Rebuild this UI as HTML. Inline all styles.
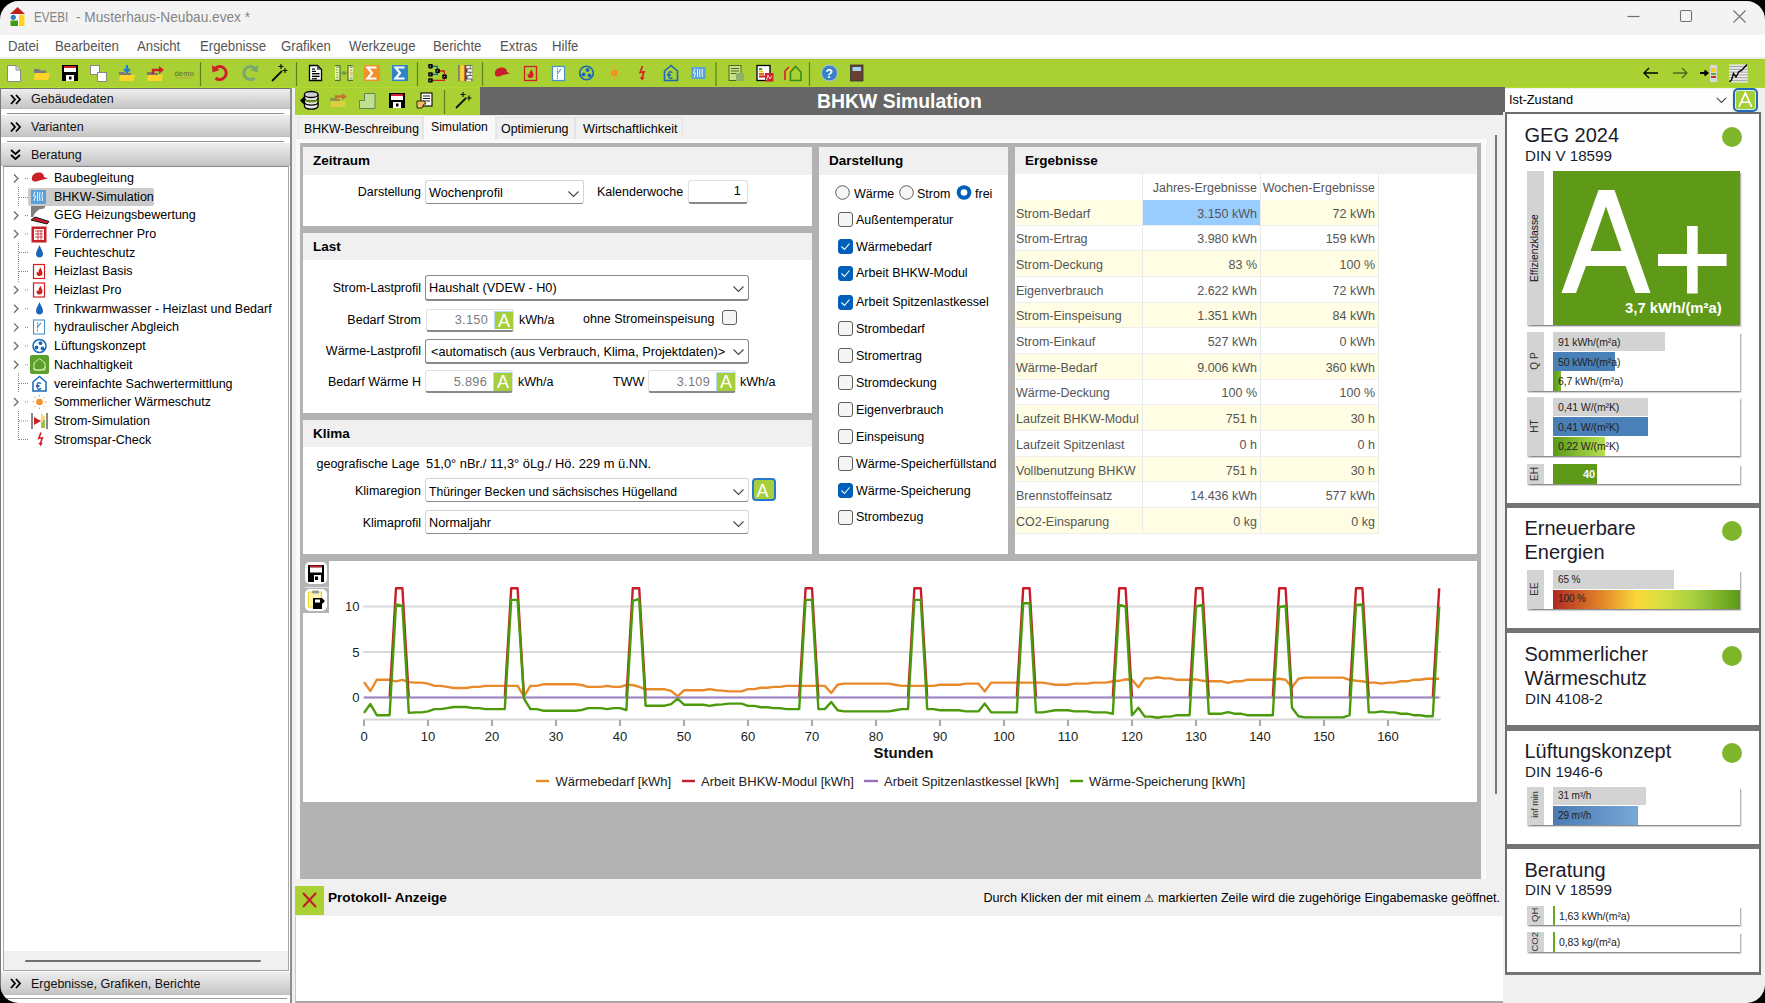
<!DOCTYPE html>
<html><head><meta charset="utf-8"><title>EVEBI</title>
<style>
*{box-sizing:border-box}
html,body{margin:0;padding:0}
body{width:1765px;height:1003px;overflow:hidden;background:#000;position:relative;font-family:"Liberation Sans",sans-serif;font-size:12.5px;color:#000}
.a{position:absolute}
.t{position:absolute;white-space:nowrap;line-height:1}
svg{position:absolute;overflow:visible}
#win{position:absolute;left:0;top:0;width:1765px;height:1003px;background:#f0f0f0;overflow:hidden}
#corner{position:absolute;left:0;top:1px;width:1765px;height:1002px;border-radius:18.5px;box-shadow:0 0 0 40px #000;z-index:99;pointer-events:none}
.hdr{position:absolute;left:4px;width:286px;height:22px;background:linear-gradient(#eeeeee,#dadada 50%,#c6c6c6);border-bottom:1px solid #bdbdbd}
.hdr .t{left:27px;top:5px;font-size:12.5px;color:#111}
.chev{position:absolute;left:10px;top:6px}
.tree .t{font-size:12.5px;color:#000}
.ph{position:absolute;background:#f0f0f0;height:27px}
.ph .t{left:10px;top:7px;font-weight:bold;font-size:13.5px}
.lbl{font-size:12.5px;color:#000}
.inp{position:absolute;background:#fff;border:1px solid #d6d6d6;border-bottom-color:#9a9a9a;border-radius:3px}
.cb{position:absolute;width:15px;height:15px;border:1px solid #5e5e5e;border-radius:3px;background:#f5f5f5}
.cb.on{background:#005fb8;border-color:#005fb8}
.row .t{font-size:12.5px;color:#555}
</style></head><body>
<div id="win">
<style>
.combo{position:absolute;background:#fff;border:1px solid #d4d4d4;border-bottom:1px solid #8a8a8a;border-radius:3px}
.combo.dk{border:1px solid #8a8a8a;border-bottom-width:2px}
.combo .t{left:3px;top:6px;font-size:12.7px}
.combo svg{right:4px;top:9.5px}
.edit{position:absolute;background:#fff;border:1px solid #e0e0e0;border-bottom:2px solid #8a8a8a;border-radius:3px}
.edit .t{right:25px;top:4.3px;font-size:12.7px;color:#7a7a7a;letter-spacing:0.3px}
.abox{position:absolute;width:19px;height:18.5px;background:#a5cf3c;color:#fff;font-size:18px;line-height:19px;text-align:center;border-top:1px solid #b8dcf8;border-left:1px solid #b8dcf8}
.lb{position:absolute;white-space:nowrap;line-height:1;font-size:12.5px}
.lbr{position:absolute;white-space:nowrap;line-height:1;font-size:12.5px;text-align:right}
</style>
<!-- title bar -->
<div class="a" style="left:0;top:0;width:1765px;height:35px;background:#f3f3f3"></div>
<svg style="left:0;top:0" width="40" height="35">
 <path d="M10 14 L17.5 7 L25 14 Z" fill="#c0201f"/>
 <rect x="10.5" y="14.5" width="14" height="12" fill="#fff"/>
 <circle cx="13.3" cy="17.3" r="2.6" fill="#2f7fc0"/>
 <rect x="10.5" y="20.5" width="7.5" height="5.5" fill="#3f9a10"/>
 <rect x="19" y="14.8" width="5.5" height="11.2" fill="#ffd21f"/>
</svg>
<div class="t" style="left:33.5px;top:9.7px;font-size:14.5px;color:#858585;transform:scaleX(0.8);transform-origin:0 0">EVEBI</div>
<div class="t" style="left:76px;top:9.7px;font-size:14.5px;color:#858585;transform:scaleX(0.943);transform-origin:0 0">- Musterhaus-Neubau.evex *</div>
<svg style="left:1620px;top:0" width="145" height="35">
 <path d="M7.5 16.5 H19.5" stroke="#707070" stroke-width="1.2"/>
 <rect x="60.5" y="10.5" width="11" height="11" rx="1.5" fill="none" stroke="#707070" stroke-width="1.1"/>
 <path d="M113.5 10.5 L125.5 22.5 M125.5 10.5 L113.5 22.5" stroke="#707070" stroke-width="1.1"/>
</svg>
<!-- menu -->
<div class="a" style="left:0;top:35px;width:1765px;height:22px;background:#fff"></div>
<div class="a" style="left:0;top:57px;width:1765px;height:2px;background:#ececec"></div>
<div class="t" style="top:38.7px;font-size:14.5px;color:#555;transform:scaleX(0.91);transform-origin:0 0;left:7.5px">Datei</div>
<div class="t" style="top:38.7px;font-size:14.5px;color:#555;transform:scaleX(0.91);transform-origin:0 0;left:55.4px">Bearbeiten</div>
<div class="t" style="top:38.7px;font-size:14.5px;color:#555;transform:scaleX(0.91);transform-origin:0 0;left:136.7px">Ansicht</div>
<div class="t" style="top:38.7px;font-size:14.5px;color:#555;transform:scaleX(0.91);transform-origin:0 0;left:199.5px">Ergebnisse</div>
<div class="t" style="top:38.7px;font-size:14.5px;color:#555;transform:scaleX(0.91);transform-origin:0 0;left:281.3px">Grafiken</div>
<div class="t" style="top:38.7px;font-size:14.5px;color:#555;transform:scaleX(0.91);transform-origin:0 0;left:349px">Werkzeuge</div>
<div class="t" style="top:38.7px;font-size:14.5px;color:#555;transform:scaleX(0.91);transform-origin:0 0;left:433px">Berichte</div>
<div class="t" style="top:38.7px;font-size:14.5px;color:#555;transform:scaleX(0.91);transform-origin:0 0;left:499.5px">Extras</div>
<div class="t" style="top:38.7px;font-size:14.5px;color:#555;transform:scaleX(0.91);transform-origin:0 0;left:552px">Hilfe</div>
<!-- toolbar -->
<div class="a" style="left:0;top:59px;width:1765px;height:29px;background:#a9d133;border-top:1px solid #a2cc22;border-bottom:1px solid #b0da2c"></div>
<svg style="left:0;top:0;z-index:2" width="1765" height="120">
 <!-- new doc -->
 <path d="M7.5 65.5 H16 L20.5 70 V81.5 H7.5 Z" fill="#fff" stroke="#888" stroke-width="1"/>
 <path d="M16 65.5 V70 H20.5" fill="#ddd" stroke="#888" stroke-width="1"/>
 <!-- open folder -->
 <path d="M34 69 H39 L40.5 70.5 H46 V73 H34 Z" fill="#7a7a7a"/>
 <path d="M35 73 H50 L48 80 H34 Z" fill="#ffd42a"/>
 <!-- save -->
 <rect x="62" y="65" width="16" height="16" fill="#000"/>
 <rect x="64" y="66" width="12" height="2" fill="#d0202a"/>
 <rect x="64" y="68" width="12" height="4" fill="#fff"/>
 <rect x="66" y="75" width="8" height="6" fill="#fff"/>
 <rect x="69" y="76.5" width="2.5" height="3" fill="#000"/>
 <!-- copy -->
 <rect x="90.5" y="65.5" width="9" height="9" fill="#fff" stroke="#888"/>
 <rect x="97.5" y="72.5" width="9" height="9" fill="#fff" stroke="#888"/>
 <!-- import -->
 <path d="M119 72 H124 L125 73 H131 V75 H119 Z" fill="#7a7a7a"/>
 <path d="M120 75 H135 L133.5 81 H119 Z" fill="#ffd42a"/>
 <path d="M127 65 V71 M124 69 L127 72 L130 69" stroke="#1f7fd0" stroke-width="2.2" fill="none"/>
 <!-- export -->
 <path d="M147 72 H152 L153 73 H158 V75 H147 Z" fill="#7a7a7a"/>
 <path d="M148 75 H163 L161.5 81 H147 Z" fill="#ffd42a"/>
 <path d="M153 74 V70 H160" stroke="#d0202a" stroke-width="2.5" fill="none"/><path d="M159 66 L164 70 L159 74 Z" fill="#d0202a"/>
 <!-- demo -->
 <text x="174.5" y="75.5" font-family="Liberation Sans" font-size="7.5" fill="#5d6640" letter-spacing="0.2">demo</text>
 <path d="M175 77.8 H192" stroke="#d08050" stroke-width="0.5"/>
 <!-- sep -->
 <path d="M200.5 62 V86" stroke="#5f7f1a" stroke-width="1.2"/>
 <!-- undo -->
 <path d="M215 68.5 A6.5 6.5 0 1 1 215.5 78" stroke="#d0202a" stroke-width="3" fill="none"/>
 <path d="M212 65 L212.5 72.5 L219.5 70 Z" fill="#d0202a"/>
 <!-- redo -->
 <path d="M255 68.5 A6.5 6.5 0 1 0 254.5 78" stroke="#7aa776" stroke-width="3" fill="none"/>
 <path d="M258 65 L257.5 72.5 L250.5 70 Z" fill="#7aa776"/>
 <!-- wand -->
 <path d="M272 81 L282 71" stroke="#111" stroke-width="1.8"/>
 <path d="M281 64 V69 M278.5 66.5 H283.5 M285 68 V73 M282.5 70.5 H287.5" stroke="#111" stroke-width="1.2"/>
 <path d="M296.5 62 V86" stroke="#5f7f1a" stroke-width="1.2"/>
 <!-- doc -->
 <path d="M309.5 65.5 H317.5 L321.5 69.5 V80.5 H309.5 Z" fill="#fff" stroke="#000" stroke-width="1.3"/>
 <path d="M317 65.8 V69.8 H321.2 Z" fill="#555"/>
 <rect x="312" y="68.5" width="3" height="1.2" fill="#000"/>
 <rect x="312" y="70.8" width="4" height="1.2" fill="#000"/>
 <rect x="312" y="73" width="7.5" height="4" fill="#aaa"/>
 <rect x="312" y="73" width="7.5" height="1.1" fill="#000"/>
 <rect x="312" y="76" width="7.5" height="1.1" fill="#000"/>
 <rect x="312" y="78.2" width="5" height="1.2" fill="#000"/>
 <!-- compare -->
 <rect x="335" y="65.5" width="5" height="15" fill="#e6f6b0"/>
 <path d="M335 65.7 H340 V80.3 H335" stroke="#56702a" stroke-width="1.2" fill="none"/>
 <path d="M336 67.5 H338.5 M336 70 H338 M336 72.5 H338.5 M336 75 H338 M336 77.5 H338.5" stroke="#7a9a4a" stroke-width="0.8"/>
 <path d="M340 73 H348" stroke="#6a8a3a" stroke-width="1"/>
 <circle cx="344" cy="73" r="1.9" fill="#7a9a3a"/>
 <rect x="348" y="65.5" width="5" height="15" fill="#e6f6b0"/>
 <path d="M353 65.7 H348 V80.3 H353" stroke="#56702a" stroke-width="1.2" fill="none"/>
 <path d="M350 67.5 H352.5 M350 78 H352.5" stroke="#7a9a4a" stroke-width="1"/>
 <path d="M350 70.3 H352 M350 72.8 H350.8 M351.3 72.8 H352.5 M350.5 75 H352.5" stroke="#d86a20" stroke-width="0.9"/>
 <!-- sigma orange -->
 <rect x="364" y="65" width="16" height="16" fill="#f0902a"/>
 <path d="M376.5 67.5 H367.5 L372 73 L367.5 78.5 H376.5" stroke="#fff" stroke-width="2.2" fill="none"/>
 <!-- sigma blue -->
 <rect x="392" y="65" width="16" height="16" fill="#2f83c8"/>
 <path d="M404.5 67.5 H395.5 L400 73 L395.5 78.5 H404.5" stroke="#fff" stroke-width="2.2" fill="none"/>
 <path d="M417.5 62 V86" stroke="#5f7f1a" stroke-width="1.2"/>
 <!-- tree diagram -->
 <path d="M432.5 66.3 H437.3 V69.5 M432.5 74.4 H437.3 V72.5" stroke="#1060c0" stroke-width="1.3" fill="none"/>
 <path d="M439.5 71 H444.3 V75 M432.5 80.4 H444.3 V78.5" stroke="#d02020" stroke-width="1.3" fill="none"/>
 <g fill="#000"><rect x="428.2" y="64.1" width="4.6" height="4.3" rx="0.8"/><rect x="435.3" y="68.8" width="4.6" height="4.3" rx="0.8"/><rect x="428.2" y="72.2" width="4.6" height="4.3" rx="0.8"/><rect x="428.2" y="78.2" width="4.6" height="4.3" rx="0.8"/><rect x="442.2" y="74.5" width="4.6" height="4.3" rx="0.8"/></g>
 <g stroke="#ddd" stroke-width="0.9"><path d="M429.5 66.8 L431 65.6"/><path d="M436.6 71.5 L438.1 70.3"/><path d="M429.5 74.9 L431 73.7"/><path d="M429.5 80.9 L431 79.7"/><path d="M443.5 77.2 L445 76"/></g>
 <!-- wall -->
 <rect x="458.4" y="65.1" width="14" height="16" fill="#4a4a4a"/>
 <rect x="458.4" y="65.1" width="1.4" height="16" fill="#8a8a9a"/>
 <rect x="459.8" y="65.1" width="4.8" height="16" fill="#f8d84a"/>
 <path d="M460.6 65.1 V81.1 M463.8 65.1 V81.1" stroke="#f5c000" stroke-width="1" stroke-dasharray="2 1"/>
 <rect x="464.6" y="65.1" width="1.2" height="16" fill="#d02020"/>
 <g fill="#eee"><rect x="466.3" y="65.8" width="3.5" height="2.6"/><rect x="470.5" y="65.8" width="1.9" height="2.6"/><rect x="467.5" y="69.2" width="4.9" height="2.6"/><rect x="466.3" y="72.6" width="3.5" height="2.6"/><rect x="470.5" y="72.6" width="1.9" height="2.6"/><rect x="467.5" y="76" width="4.9" height="2.6"/><rect x="466.3" y="79.4" width="5" height="1.7"/></g>
 <path d="M482.5 62 V86" stroke="#5f7f1a" stroke-width="1.2"/>
 <!-- cap -->
 <path d="M495 75 C494 69 499 67 503 67.5 C506 68 507 70 507 72 L510 73.5 L503 75 C500 76 497 78 495 75 Z" fill="#c8202a"/>
 <!-- heat box -->
 <rect x="524.5" y="66.5" width="12" height="14" fill="none" stroke="#d0202a" stroke-width="1.3"/>
 <path d="M530.5 78 C528 78 527 76 528 73.5 C528.5 74.8 529.3 75 529.5 74 C529.5 72 530.5 70.5 532 69.5 C531.6 71.5 533.5 72.5 533.5 75 C533.5 77 532.2 78 530.5 78 Z" fill="#d0202a"/>
 <!-- hydraulic -->
 <rect x="552.5" y="66.5" width="12" height="14" fill="#fff" stroke="#4a90d0" stroke-width="1.2"/>
 <path d="M557.5 68.5 V79" stroke="#4a90d0" stroke-width="1.1" stroke-dasharray="1.5 0.8" fill="none"/><path d="M557.5 73.5 L561 69" stroke="#4a90d0" stroke-width="1.2" fill="none"/>
 <!-- vent -->
 <circle cx="586.5" cy="73" r="6.8" fill="none" stroke="#1a66b8" stroke-width="1.6"/>
 <circle cx="587.5" cy="70" r="2" fill="#1a66b8"/><circle cx="583.5" cy="74.5" r="2" fill="#1a66b8"/><circle cx="589.5" cy="75.5" r="2" fill="#1a66b8"/>
 
 <!-- sun -->
 <circle cx="614.5" cy="73" r="3.6" fill="#f4922a"/>
 <path d="M614.5 66 V67.5 M614.5 78.5 V80 M607.5 73 H609 M620 73 H621.5 M609.5 68 L610.5 69 M618.5 77 L619.5 78 M619.5 68 L618.5 69 M610.5 77 L609.5 78" stroke="#f4922a" stroke-width="1"/>
 <!-- lightning -->
 <path d="M642.5 66 L640.2 72.5 L644 71.8 L642 78" stroke="#d8202a" stroke-width="1.7" fill="none"/><path d="M639.8 77.2 H644.6 L642.2 80.6 Z" fill="#d8202a"/>
 <!-- house euro -->
 <path d="M664.5 80.5 V71 L671 65.5 L677.5 71 V80.5 Z" fill="none" stroke="#1a6ab8" stroke-width="1.6"/>
 <text x="667" y="79" font-family="Liberation Sans" font-size="10" fill="#1a6ab8" font-weight="bold">€</text>
 <!-- bhkw -->
 <rect x="691.5" y="67" width="14" height="12" fill="#5ba0d8"/>
 <path d="M695 68.5 L693.5 73 H695.5 L694 77.5 M697.5 69 V77 M700 69 Q699 73 700 77 M702.5 69 Q701.5 73 702.5 77" stroke="#fff" stroke-width="0.9" fill="none"/>
 <path d="M716 62 V86" stroke="#5f7f1a" stroke-width="1.2"/>
 <!-- report -->
 <rect x="729" y="65.5" width="12" height="15" fill="#c9e08a" stroke="#4a6a1a" stroke-width="1"/>
 <path d="M731 68.5 H739 M731 71 H739 M731 73.5 H737" stroke="#4a6a1a" stroke-width="1"/>
 <rect x="736" y="73" width="8" height="8" fill="#8fb06a"/>
 <!-- energy pdf -->
 <rect x="757" y="65.5" width="13" height="15" fill="#fff" stroke="#000" stroke-width="1.3"/>
 <rect x="759" y="68" width="3" height="2" fill="#3a9a2a"/><rect x="759" y="70.5" width="4" height="2" fill="#f0c020"/><rect x="759" y="73" width="5" height="2" fill="#e07020"/><rect x="759" y="75.5" width="6" height="2" fill="#d02020"/>
 <rect x="765" y="73" width="8.5" height="8.5" fill="#d02030"/>
 <path d="M766.5 80 L768 75 L770 79 L772 76" stroke="#fff" stroke-width="0.8" fill="none"/>
 <!-- arcs house -->
 <path d="M785 80 V71 L789 67" stroke="#d0202a" stroke-width="1.6" fill="none"/>
 <path d="M787.5 80 V71.5 L791.5 68" stroke="#f0c020" stroke-width="1.6" fill="none"/>
 <path d="M790.5 80.5 V72 L795.5 66.5 L801 72 V80.5 Z" stroke="#3a8a1a" stroke-width="1.6" fill="none"/>
 <path d="M809.5 62 V86" stroke="#5f7f1a" stroke-width="1.2"/>
 <!-- help -->
 <circle cx="829.5" cy="73" r="8" fill="#3a82c8" stroke="#aac8e8" stroke-width="1"/>
 <text x="825.5" y="78" font-family="Liberation Sans" font-size="12" font-weight="bold" fill="#fff">?</text>
 <!-- door -->
 <rect x="850.5" y="65" width="12.5" height="16" fill="#6a4030" stroke="#333" stroke-width="0.8"/>
 <rect x="852.5" y="67" width="8.5" height="4" fill="#a8d0f0"/>
 <!-- right icons -->
 <path d="M1644 73 H1658 M1649 68 L1644 73 L1649 78" stroke="#000" stroke-width="1.3" fill="none"/>
 <path d="M1673 73 H1687 M1682 68 L1687 73 L1682 78" stroke="#506a20" stroke-width="1.3" fill="none"/>
 <path d="M1700 73 H1707 M1704.5 70.5 L1707.5 73 L1704.5 75.5" stroke="#000" stroke-width="2" fill="none"/>
 <rect x="1710" y="65" width="7" height="17" fill="#d8d8d8"/><rect x="1711" y="68" width="5" height="4" fill="#f5d020"/><rect x="1711" y="73" width="5" height="2" fill="#60b030"/><rect x="1711" y="76" width="5" height="2" fill="#d03030"/>
 <rect x="1729" y="64.5" width="18.5" height="18" fill="#f4f4f4"/>
 <path d="M1729 66.5 H1747.5 M1729 69.3 H1747.5 M1729 72.1 H1747.5 M1729 74.9 H1747.5 M1729 77.7 H1747.5 M1729 80.5 H1747.5" stroke="#a8a8a8" stroke-width="1.3"/>
 <path d="M1729.5 82 L1731.5 80 L1733.5 73.5 L1736 77 L1739 71.5 L1741.5 70.5 L1747 64.5" stroke="#000" stroke-width="1.4" fill="none"/>
</svg>
<!-- left panel -->
<div class="a" style="left:0;top:88px;width:292px;height:915px;background:#f0f0f0"></div>
<div class="a" style="left:0;top:88px;width:292px;height:915px;background:#fff;border-left:1px solid #7a7a7a;border-right:2px solid #8e8e8e"></div>
<div class="a" style="left:7px;top:113px;width:277px;height:1px;background:#8f8f8f"></div>
<div class="a" style="left:7px;top:141px;width:277px;height:1px;background:#8f8f8f"></div>
<div class="hdr" style="left:1px;top:88px;width:289px;height:21px;border-top:1px solid #707070"><div class="t" style="left:30px;top:4.2px">Gebäudedaten</div></div>
<div class="hdr" style="left:1px;top:115px;width:289px;height:22px"><div class="t" style="left:30px;top:6px">Varianten</div></div>
<div class="hdr" style="left:1px;top:143px;width:289px;height:23px"><div class="t" style="left:30px;top:6px">Beratung</div></div>
<svg style="left:0;top:0" width="30" height="170">
 <path d="M11 95 L15 99.5 L11 104 M16 95 L20 99.5 L16 104" stroke="#000" stroke-width="1.8" fill="none"/>
 <path d="M11 122.5 L15 127 L11 131.5 M16 122.5 L20 127 L16 131.5" stroke="#000" stroke-width="1.8" fill="none"/>
 <path d="M11 150 L15.5 154 L20 150 M11 155 L15.5 159 L20 155" stroke="#000" stroke-width="1.8" fill="none"/>
</svg>
<!-- tree box -->
<div class="a" style="left:3px;top:166px;width:286px;height:805px;background:#fff;border:1px solid #a8a8a8;border-top:1.5px solid #888c92"></div>
<div class="a" style="left:4px;top:951px;width:284px;height:19px;background:#f0f0f0"></div>
<div class="a" style="left:25px;top:959.5px;width:236px;height:2px;background:#707070;border-radius:1px"></div>
<div class="a" style="left:28px;top:188px;width:126px;height:18px;background:#cbcbcb;border-radius:2px"></div>
<div class="tree">
 <div class="t" style="left:54px;top:171.8px">Baubegleitung</div>
 <div class="t" style="left:54px;top:190.5px">BHKW-Simulation</div>
 <div class="t" style="left:54px;top:209.2px">GEG Heizungsbewertung</div>
 <div class="t" style="left:54px;top:227.9px">Förderrechner Pro</div>
 <div class="t" style="left:54px;top:246.6px">Feuchteschutz</div>
 <div class="t" style="left:54px;top:265.3px">Heizlast Basis</div>
 <div class="t" style="left:54px;top:284px">Heizlast Pro</div>
 <div class="t" style="left:54px;top:302.7px">Trinkwarmwasser - Heizlast und Bedarf</div>
 <div class="t" style="left:54px;top:321.4px">hydraulischer Abgleich</div>
 <div class="t" style="left:54px;top:340.1px">Lüftungskonzept</div>
 <div class="t" style="left:54px;top:358.8px">Nachhaltigkeit</div>
 <div class="t" style="left:54px;top:377.5px">vereinfachte Sachwertermittlung</div>
 <div class="t" style="left:54px;top:396.2px">Sommerlicher Wärmeschutz</div>
 <div class="t" style="left:54px;top:414.9px">Strom-Simulation</div>
 <div class="t" style="left:54px;top:433.6px">Stromspar-Check</div>
</div>
<svg style="left:0;top:0" width="60" height="450">
 <g stroke="#6a6a6a" stroke-width="1.3" fill="none">
  <path d="M14 174.5 L18 178.5 L14 182.5"/>
  <path d="M14 211.5 L18 215.5 L14 219.5"/>
  <path d="M14 230 L18 234 L14 238"/>
  <path d="M14 286 L18 290 L14 294"/>
  <path d="M14 304.7 L18 308.7 L14 312.7"/>
  <path d="M14 323.4 L18 327.4 L14 331.4"/>
  <path d="M14 342 L18 346 L14 350"/>
  <path d="M14 360.8 L18 364.8 L14 368.8"/>
  <path d="M14 398 L18 402 L14 406"/>
 </g>
 <g stroke="#888" stroke-width="1" stroke-dasharray="1 1" fill="none">
  <path d="M18.5 187 V206 M19 197.5 H29"/>
  <path d="M18.5 243 V282 M19 252.5 H29 M19 271.5 H29"/>
  <path d="M18.5 373 V393 M19 383.5 H29"/>
  <path d="M18.5 411 V440 M19 421 H29 M19 439.5 H29"/>
  <path d="M25 178.5 H29 M25 215.5 H29 M25 234 H29 M25 290 H29 M25 308.7 H29 M25 327.4 H29 M25 346 H29 M25 364.8 H29 M25 402 H29"/>
 </g>
 <!-- icons -->
 <path d="M32 180 C31 175 35 172.5 39 172.5 C42 172.5 44 174.5 44 177 L48 178.5 L41 180 C38 181 34 183 32 180 Z" fill="#c8202a"/>
 <rect x="31" y="190" width="15" height="14" fill="#5ba0d8"/>
 <path d="M35 191.5 L33.5 196 H35.5 L34 201 M37.5 192 V201 M40 192 Q39 196.5 40 201 M42.5 192 Q41.5 196.5 42.5 201" stroke="#fff" stroke-width="0.9" fill="none"/>
 <path d="M31 206 H45.5 L44 208.5 L39 209.5 L35 213 L33 217 L31 217 Z" fill="#808080"/>
 <path d="M31 220 L35 217 L49 221.5 L47 224 Z" fill="#c8202a" stroke="#111" stroke-width="1"/>
 <rect x="31.5" y="226.5" width="15" height="16" fill="#c8202a"/>
 <rect x="34" y="229" width="10" height="11" fill="#fff"/>
 <path d="M35 231 H43 M35 234 H43 M35 237 H43 M38 230 V240 M41 230 V240" stroke="#c8202a" stroke-width="0.8"/>
 <path d="M39.5 245 C38 249 36 251 36 254 C36 256 37.5 257.5 39.5 257.5 C41.5 257.5 43 256 43 254 C43 251 41 249 39.5 245 Z" fill="#1a66b8"/>
 <rect x="33.5" y="264.5" width="11" height="14" fill="#fff" stroke="#d02020" stroke-width="1.2"/>
 <path d="M39.5 276 C37 276 36 274 37 271.5 C37.5 272.8 38.3 273 38.5 272 C38.5 270 39.5 268.5 41 267.5 C40.6 269.5 42.5 270.5 42.5 273 C42.5 275 41.2 276 39.5 276 Z" fill="#d02020"/>
 <rect x="33.5" y="283" width="11" height="14" fill="#fff" stroke="#d02020" stroke-width="1.2"/>
 <path d="M39.5 294.5 C37 294.5 36 292.5 37 290 C37.5 291.3 38.3 291.5 38.5 290.5 C38.5 288.5 39.5 287 41 286 C40.6 288 42.5 289 42.5 291.5 C42.5 293.5 41.2 294.5 39.5 294.5 Z" fill="#d02020"/>
 <path d="M39.5 302 C38 306 36 308 36 311 C36 313 37.5 314.5 39.5 314.5 C41.5 314.5 43 313 43 311 C43 308 41 306 39.5 302 Z" fill="#1a66b8"/>
 <rect x="33.5" y="320" width="11" height="14" fill="#fff" stroke="#4a90d0" stroke-width="1.1"/>
 <path d="M37.5 322.5 V332" stroke="#4a90d0" stroke-width="1.1" stroke-dasharray="1.5 0.8" fill="none"/><path d="M37.5 327 L41 322.8" stroke="#4a90d0" stroke-width="1.2" fill="none"/>
 <circle cx="39.5" cy="346" r="6.5" fill="none" stroke="#1a66b8" stroke-width="1.5"/>
 <circle cx="40.5" cy="343.2" r="1.9" fill="#1a66b8"/><circle cx="36.5" cy="347.5" r="1.9" fill="#1a66b8"/><circle cx="42.5" cy="348.5" r="1.9" fill="#1a66b8"/>
 <rect x="30" y="355" width="19" height="19" rx="2" fill="#5aa02a"/>
 <path d="M34 370 V363 L39.5 358.5 L45 363 V370 Z" fill="none" stroke="#d8f0c0" stroke-width="1"/>
 <path d="M33 368 Q39 373 46 367" stroke="#d8f0c0" stroke-width="1" fill="none"/>
 <path d="M33 391 V382 L39.5 376.5 L46 382 V391 Z" fill="none" stroke="#1a66b8" stroke-width="1.5"/>
 <text x="35.8" y="389.5" font-family="Liberation Sans" font-size="10" font-weight="bold" fill="#1a66b8">€</text>
 <circle cx="39.5" cy="402" r="3.3" fill="#f4922a"/>
 <path d="M39.5 395 V396.5 M39.5 407.5 V409 M32.5 402 H34 M45 402 H46.5 M34.5 397 L35.5 398 M43.5 406 L44.5 407 M44.5 397 L43.5 398 M35.5 406 L34.5 407" stroke="#f4922a" stroke-width="1"/>
 <rect x="31" y="413" width="2" height="16" fill="#888"/>
 <rect x="46" y="413" width="2" height="16" fill="#888"/>
 <path d="M34 417 L41 421 L34 425 Z" fill="#d02020"/>
 <path d="M42 414 V428 M44 416 V428" stroke="#f0c020" stroke-width="1.2"/>
 <path d="M42 422 V428 M44 420 V428" stroke="#60b030" stroke-width="1.2"/>
 <path d="M41 432.5 L38.7 438.5 L42.3 437.8 L40.5 443.5" stroke="#d8202a" stroke-width="1.6" fill="none"/><path d="M38.3 442.8 H42.9 L40.6 446.2 Z" fill="#d8202a"/>
</svg>
<div class="hdr" style="left:1px;top:972px;width:289px;height:23px"><div class="t" style="left:30px;top:6px">Ergebnisse, Grafiken, Berichte</div></div>
<svg style="left:0;top:960px" width="30" height="40">
 <path d="M11 19 L15 23.5 L11 28 M16 19 L20 23.5 L16 28" stroke="#000" stroke-width="1.8" fill="none"/>
</svg>
<div class="a" style="left:7px;top:998px;width:280px;height:1px;background:#999"></div>
<!-- main area -->
<div class="a" style="left:295px;top:88px;width:185px;height:27px;background:#a9d133"></div>
<div class="a" style="left:480px;top:87px;width:1025px;height:28px;background:#666"></div>
<div class="t" style="left:817px;top:92px;font-size:19.4px;font-weight:bold;color:#fff">BHKW Simulation</div>
<svg style="left:0;top:0;z-index:2" width="480" height="120">
 <!-- database -->
 <path d="M300 100.5 L304 96.5 V104.5 Z" fill="#000"/>
 <path d="M304.5 94.5 V106.5 A6.8 3 0 0 0 318 106.5 V94.5" fill="#e8e8e8" stroke="#000" stroke-width="1.3"/>
 <ellipse cx="311.2" cy="94.5" rx="6.8" ry="3" fill="#d0d0d0" stroke="#000" stroke-width="1.3"/>
 <path d="M304.5 98.5 A6.8 3 0 0 0 318 98.5 M304.5 102.5 A6.8 3 0 0 0 318 102.5" stroke="#000" stroke-width="1.1" fill="none"/>
 <path d="M305.5 100 A6 2.4 0 0 0 317 100" stroke="#6a9a10" stroke-width="1.8" fill="none"/>
 <!-- folder arrow (disabled) -->
 <path d="M330 98 H334 L335 99 H340 V101 H330 Z" fill="#8a9a50"/>
 <path d="M331 101 H346 L344.5 107 H330 Z" fill="#d8d040"/>
 <path d="M336 100 V96.5 H343" stroke="#c07830" stroke-width="2.4" fill="none"/><path d="M342 93 L347 96.5 L342 100 Z" fill="#c07830"/>
 <!-- green step -->
 <path d="M359.5 108.5 V100.5 H364.5 V93.5 H375 V108.5 Z" fill="#c0e090" stroke="#5a8a5a" stroke-width="1"/>
 <!-- save -->
 <rect x="389" y="93" width="16" height="15" fill="#000"/>
 <rect x="391" y="94" width="12" height="2" fill="#d0202a"/>
 <rect x="391" y="96" width="12" height="4" fill="#fff"/>
 <rect x="393" y="102" width="8" height="6" fill="#fff"/>
 <rect x="396" y="103.5" width="2.5" height="3" fill="#000"/>
 <!-- print hand -->
 <rect x="421" y="93" width="11" height="13" fill="#fff" stroke="#000" stroke-width="1.1"/>
 <path d="M423 96 H430 M423 98.5 H430 M423 101 H430" stroke="#000" stroke-width="0.9"/>
 <path d="M417 101 H424 L426 104 H424 L422 108 H417 Z" fill="#f0c060" stroke="#000" stroke-width="0.8"/>
 <path d="M444.5 90 V114" stroke="#5f7f1a" stroke-width="1.2"/>
 <!-- wand -->
 <path d="M456 108 L466 98" stroke="#111" stroke-width="1.8"/>
 <path d="M463 92 V97 M460.5 94.5 H465.5 M469 95.5 V100.5 M466.5 98 H471.5" stroke="#111" stroke-width="1.2"/>
</svg>
<!-- tabs -->
<div class="a" style="left:296px;top:115px;width:1205px;height:885px;background:#f0f0f0"></div>
<div class="a" style="left:296px;top:139px;width:1189px;height:740px;background:#f9f9f9"></div>
<div class="a" style="left:298px;top:117px;width:125px;height:22px;background:#f0f0f0;border:1px solid #e3e3e3;border-bottom:none"></div>
<div class="a" style="left:423px;top:115px;width:73px;height:25px;background:#f9f9f9;border:1px solid #e8e8e8;border-bottom:none"></div>
<div class="a" style="left:496px;top:117px;width:79px;height:22px;background:#f0f0f0;border:1px solid #e3e3e3;border-bottom:none"></div>
<div class="a" style="left:575px;top:117px;width:108px;height:22px;background:#f0f0f0;border:1px solid #e3e3e3;border-bottom:none"></div>
<div class="t" style="left:304px;top:122.8px;font-size:12.2px">BHKW-Beschreibung</div>
<div class="t" style="left:431px;top:120.8px;font-size:12.2px">Simulation</div>
<div class="t" style="left:501px;top:122.8px;font-size:12.4px">Optimierung</div>
<div class="t" style="left:583px;top:122.8px;font-size:12.6px">Wirtschaftlichkeit</div>
<div class="a" style="left:1485px;top:139px;width:1px;height:740px;background:#fff"></div>
<div class="a" style="left:1495px;top:135px;width:1.6px;height:659px;background:#777"></div>
<!-- content frame -->
<div class="a" style="left:300px;top:143px;width:1181px;height:661px;background:#b2b2b2"></div>
<!-- Zeitraum -->
<div class="a" style="left:303px;top:147px;width:509px;height:79px;background:#fff"></div>
<div class="ph" style="left:303px;top:147px;width:509px;height:28px"><div class="t" style="left:10px;top:6.5px">Zeitraum</div></div>
<div class="lbr" style="right:1344px;top:185.5px">Darstellung</div>
<div class="combo" style="left:425px;top:180px;width:159px;height:24px"><div class="t">Wochenprofil</div><svg width="11" height="6"><path d="M0.5 0.5 L5.5 5.5 L10.5 0.5" stroke="#444" stroke-width="1.1" fill="none"/></svg></div>
<div class="lb" style="left:597px;top:185.5px">Kalenderwoche</div>
<div class="edit" style="left:688px;top:180px;width:60px;height:24px"><div class="t" style="right:6px;color:#000">1</div></div>
<!-- Last -->
<div class="a" style="left:303px;top:233px;width:509px;height:180px;background:#fff"></div>
<div class="ph" style="left:303px;top:233px;width:509px;height:27px"><div class="t" style="left:10px;top:6.5px">Last</div></div>
<div class="lbr" style="right:1344px;top:282px">Strom-Lastprofil</div>
<div class="combo dk" style="left:425px;top:275px;width:324px;height:25.5px"><div class="t">Haushalt (VDEW - H0)</div><svg width="11" height="6"><path d="M0.5 0.5 L5.5 5.5 L10.5 0.5" stroke="#444" stroke-width="1.1" fill="none"/></svg></div>
<div class="lbr" style="right:1344px;top:313.5px">Bedarf Strom</div>
<div class="edit" style="left:426px;top:308.5px;width:88px;height:23.2px"><div class="t">3.150</div><div class="abox" style="left:67px;top:1px">A</div></div>
<div class="lb" style="left:519px;top:313.5px">kWh/a</div>
<div class="lb" style="left:583px;top:312.5px">ohne Stromeinspeisung</div>
<div class="cb" style="left:722px;top:310px"></div>
<div class="lbr" style="right:1344px;top:345px">Wärme-Lastprofil</div>
<div class="combo dk" style="left:425px;top:338.5px;width:324px;height:25px"><div class="t" style="left:5px">&lt;automatisch (aus Verbrauch, Klima, Projektdaten)&gt;</div><svg width="11" height="6"><path d="M0.5 0.5 L5.5 5.5 L10.5 0.5" stroke="#444" stroke-width="1.1" fill="none"/></svg></div>
<div class="lbr" style="right:1344px;top:375.5px">Bedarf Wärme H</div>
<div class="edit" style="left:425px;top:370.3px;width:88px;height:23.2px"><div class="t">5.896</div><div class="abox" style="left:67px;top:1px">A</div></div>
<div class="lb" style="left:518px;top:375.5px">kWh/a</div>
<div class="lb" style="left:613px;top:375.5px">TWW</div>
<div class="edit" style="left:648px;top:370.3px;width:88px;height:23.2px"><div class="t">3.109</div><div class="abox" style="left:67px;top:1px">A</div></div>
<div class="lb" style="left:740px;top:375.5px">kWh/a</div>
<!-- Klima -->
<div class="a" style="left:303px;top:420px;width:509px;height:134px;background:#fff"></div>
<div class="ph" style="left:303px;top:420px;width:509px;height:27px"><div class="t" style="left:10px;top:6.5px">Klima</div></div>
<div class="lb" style="left:316.5px;top:458px">geografische Lage</div>
<div class="lb" style="left:426px;top:457.8px;font-size:12.9px">51,0° nBr./ 11,3° öLg./ Hö. 229 m ü.NN.</div>
<div class="lbr" style="right:1344px;top:485px">Klimaregion</div>
<div class="combo" style="left:425px;top:478.3px;width:324px;height:23.7px"><div class="t" style="font-size:12.2px;top:6.3px">Thüringer Becken und sächsisches Hügelland</div><svg width="11" height="6"><path d="M0.5 0.5 L5.5 5.5 L10.5 0.5" stroke="#444" stroke-width="1.1" fill="none"/></svg></div>
<div class="a" style="left:751.5px;top:478px;width:24px;height:22.5px;border:2px solid #2a78c8;border-radius:4px;background:#a5cf3c"><div class="t" style="left:3px;top:1.5px;font-size:18px;color:#fff">A</div></div>
<div class="lbr" style="right:1344px;top:516.5px">Klimaprofil</div>
<div class="combo" style="left:425px;top:510px;width:324px;height:23.5px"><div class="t">Normaljahr</div><svg width="11" height="6"><path d="M0.5 0.5 L5.5 5.5 L10.5 0.5" stroke="#444" stroke-width="1.1" fill="none"/></svg></div>
<!-- Darstellung -->
<div class="a" style="left:819px;top:147px;width:189px;height:407px;background:#fff"></div>
<div class="ph" style="left:819px;top:147px;width:189px;height:28px"><div class="t" style="left:10px;top:6.5px">Darstellung</div></div>
<svg style="left:0;top:0" width="1010" height="560">
 <circle cx="842.5" cy="192.5" r="6.8" fill="#f7f7f7" stroke="#5e5e5e" stroke-width="1"/>
 <circle cx="906.5" cy="192.5" r="6.8" fill="#f7f7f7" stroke="#5e5e5e" stroke-width="1"/>
 <circle cx="964" cy="192.5" r="7.3" fill="#005fb8"/>
 <circle cx="964" cy="192.5" r="3.3" fill="#fff"/>
</svg>
<div class="lb" style="left:854px;top:187.5px">Wärme</div>
<div class="lb" style="left:917px;top:187.5px">Strom</div>
<div class="lb" style="left:975px;top:187.5px">frei</div>
<div class="cb" style="left:838px;top:212px"></div><div class="lb" style="left:856px;top:213.5px">Außentemperatur</div>
<div class="cb on" style="left:838px;top:239px"></div><div class="lb" style="left:856px;top:240.5px">Wärmebedarf</div>
<div class="cb on" style="left:838px;top:266px"></div><div class="lb" style="left:856px;top:267px">Arbeit BHKW-Modul</div>
<div class="cb on" style="left:838px;top:295px"></div><div class="lb" style="left:856px;top:295.5px">Arbeit Spitzenlastkessel</div>
<div class="cb" style="left:838px;top:321px"></div><div class="lb" style="left:856px;top:322.5px">Strombedarf</div>
<div class="cb" style="left:838px;top:348px"></div><div class="lb" style="left:856px;top:349.5px">Stromertrag</div>
<div class="cb" style="left:838px;top:375px"></div><div class="lb" style="left:856px;top:376.5px">Stromdeckung</div>
<div class="cb" style="left:838px;top:402px"></div><div class="lb" style="left:856px;top:403.5px">Eigenverbrauch</div>
<div class="cb" style="left:838px;top:429px"></div><div class="lb" style="left:856px;top:430.5px">Einspeisung</div>
<div class="cb" style="left:838px;top:456px"></div><div class="lb" style="left:856px;top:457.5px">Wärme-Speicherfüllstand</div>
<div class="cb on" style="left:838px;top:483px"></div><div class="lb" style="left:856px;top:484.5px">Wärme-Speicherung</div>
<div class="cb" style="left:838px;top:510px"></div><div class="lb" style="left:856px;top:511px">Strombezug</div>
<svg style="left:0;top:0" width="860" height="520">
 <g stroke="#fff" stroke-width="1.1" fill="none">
  <path d="M841.5 246.5 L844.5 249.5 L849.5 243.5"/>
  <path d="M841.5 273.5 L844.5 276.5 L849.5 270.5"/>
  <path d="M841.5 302.5 L844.5 305.5 L849.5 299.5"/>
  <path d="M841.5 490.5 L844.5 493.5 L849.5 487.5"/>
 </g>
</svg>
<!-- Ergebnisse -->
<div class="a" style="left:1015px;top:147px;width:462px;height:407px;background:#fff"></div>
<div class="ph" style="left:1015px;top:147px;width:462px;height:27px"><div class="t" style="left:10px;top:6.5px">Ergebnisse</div></div>
<div class="a" style="left:1015px;top:174px;width:363px;height:26px;background:#fff"></div>
<div class="lbr" style="right:508px;top:181.5px;color:#555">Jahres-Ergebnisse</div>
<div class="lbr" style="right:390px;top:181.5px;color:#555">Wochen-Ergebnisse</div>
<div class="a" style="left:1015px;top:200.00px;width:363px;height:25.67px;background:#fffde3"></div>
<div class="a" style="left:1143px;top:200.00px;width:117px;height:24.67px;background:#99ccff"></div>
<div class="lb" style="left:1016px;top:207.80px;color:#555">Strom-Bedarf</div>
<div class="lbr" style="right:508px;top:207.80px;color:#555">3.150 kWh</div>
<div class="lbr" style="right:390px;top:207.80px;color:#555">72 kWh</div>
<div class="a" style="left:1015px;top:224.67px;width:363px;height:1px;background:#eeeeee"></div>
<div class="a" style="left:1015px;top:225.67px;width:363px;height:25.67px;background:#fff"></div>
<div class="lb" style="left:1016px;top:233.47px;color:#555">Strom-Ertrag</div>
<div class="lbr" style="right:508px;top:233.47px;color:#555">3.980 kWh</div>
<div class="lbr" style="right:390px;top:233.47px;color:#555">159 kWh</div>
<div class="a" style="left:1015px;top:250.34px;width:363px;height:1px;background:#eeeeee"></div>
<div class="a" style="left:1015px;top:251.34px;width:363px;height:25.67px;background:#fffde3"></div>
<div class="lb" style="left:1016px;top:259.14px;color:#555">Strom-Deckung</div>
<div class="lbr" style="right:508px;top:259.14px;color:#555">83 %</div>
<div class="lbr" style="right:390px;top:259.14px;color:#555">100 %</div>
<div class="a" style="left:1015px;top:276.01px;width:363px;height:1px;background:#eeeeee"></div>
<div class="a" style="left:1015px;top:277.01px;width:363px;height:25.67px;background:#fff"></div>
<div class="lb" style="left:1016px;top:284.81px;color:#555">Eigenverbrauch</div>
<div class="lbr" style="right:508px;top:284.81px;color:#555">2.622 kWh</div>
<div class="lbr" style="right:390px;top:284.81px;color:#555">72 kWh</div>
<div class="a" style="left:1015px;top:301.68px;width:363px;height:1px;background:#eeeeee"></div>
<div class="a" style="left:1015px;top:302.68px;width:363px;height:25.67px;background:#fffde3"></div>
<div class="lb" style="left:1016px;top:310.48px;color:#555">Strom-Einspeisung</div>
<div class="lbr" style="right:508px;top:310.48px;color:#555">1.351 kWh</div>
<div class="lbr" style="right:390px;top:310.48px;color:#555">84 kWh</div>
<div class="a" style="left:1015px;top:327.35px;width:363px;height:1px;background:#eeeeee"></div>
<div class="a" style="left:1015px;top:328.35px;width:363px;height:25.67px;background:#fff"></div>
<div class="lb" style="left:1016px;top:336.15px;color:#555">Strom-Einkauf</div>
<div class="lbr" style="right:508px;top:336.15px;color:#555">527 kWh</div>
<div class="lbr" style="right:390px;top:336.15px;color:#555">0 kWh</div>
<div class="a" style="left:1015px;top:353.02px;width:363px;height:1px;background:#eeeeee"></div>
<div class="a" style="left:1015px;top:354.02px;width:363px;height:25.67px;background:#fffde3"></div>
<div class="lb" style="left:1016px;top:361.82px;color:#555">Wärme-Bedarf</div>
<div class="lbr" style="right:508px;top:361.82px;color:#555">9.006 kWh</div>
<div class="lbr" style="right:390px;top:361.82px;color:#555">360 kWh</div>
<div class="a" style="left:1015px;top:378.69px;width:363px;height:1px;background:#eeeeee"></div>
<div class="a" style="left:1015px;top:379.69px;width:363px;height:25.67px;background:#fff"></div>
<div class="lb" style="left:1016px;top:387.49px;color:#555">Wärme-Deckung</div>
<div class="lbr" style="right:508px;top:387.49px;color:#555">100 %</div>
<div class="lbr" style="right:390px;top:387.49px;color:#555">100 %</div>
<div class="a" style="left:1015px;top:404.36px;width:363px;height:1px;background:#eeeeee"></div>
<div class="a" style="left:1015px;top:405.36px;width:363px;height:25.67px;background:#fffde3"></div>
<div class="lb" style="left:1016px;top:413.16px;color:#555">Laufzeit BHKW-Modul</div>
<div class="lbr" style="right:508px;top:413.16px;color:#555">751 h</div>
<div class="lbr" style="right:390px;top:413.16px;color:#555">30 h</div>
<div class="a" style="left:1015px;top:430.03px;width:363px;height:1px;background:#eeeeee"></div>
<div class="a" style="left:1015px;top:431.03px;width:363px;height:25.67px;background:#fff"></div>
<div class="lb" style="left:1016px;top:438.83px;color:#555">Laufzeit Spitzenlast</div>
<div class="lbr" style="right:508px;top:438.83px;color:#555">0 h</div>
<div class="lbr" style="right:390px;top:438.83px;color:#555">0 h</div>
<div class="a" style="left:1015px;top:455.70px;width:363px;height:1px;background:#eeeeee"></div>
<div class="a" style="left:1015px;top:456.70px;width:363px;height:25.67px;background:#fffde3"></div>
<div class="lb" style="left:1016px;top:464.50px;color:#555">Vollbenutzung BHKW</div>
<div class="lbr" style="right:508px;top:464.50px;color:#555">751 h</div>
<div class="lbr" style="right:390px;top:464.50px;color:#555">30 h</div>
<div class="a" style="left:1015px;top:481.37px;width:363px;height:1px;background:#eeeeee"></div>
<div class="a" style="left:1015px;top:482.37px;width:363px;height:25.67px;background:#fff"></div>
<div class="lb" style="left:1016px;top:490.17px;color:#555">Brennstoffeinsatz</div>
<div class="lbr" style="right:508px;top:490.17px;color:#555">14.436 kWh</div>
<div class="lbr" style="right:390px;top:490.17px;color:#555">577 kWh</div>
<div class="a" style="left:1015px;top:507.04px;width:363px;height:1px;background:#eeeeee"></div>
<div class="a" style="left:1015px;top:508.04px;width:363px;height:25.67px;background:#fffde3"></div>
<div class="lb" style="left:1016px;top:515.84px;color:#555">CO2-Einsparung</div>
<div class="lbr" style="right:508px;top:515.84px;color:#555">0 kg</div>
<div class="lbr" style="right:390px;top:515.84px;color:#555">0 kg</div>
<div class="a" style="left:1015px;top:532.71px;width:363px;height:1px;background:#eeeeee"></div>
<div class="a" style="left:1142px;top:174px;width:1px;height:359.7px;background:#eaeaea"></div>
<div class="a" style="left:1260px;top:174px;width:1px;height:359.7px;background:#eaeaea"></div>
<div class="a" style="left:1378px;top:174px;width:1px;height:359.7px;background:#eaeaea"></div>
<!-- chart -->
<div class="a" style="left:303px;top:561px;width:1174px;height:241px;background:#fff"></div>
<div class="a" style="left:303px;top:561px;width:26px;height:52px;background:#b4b4b4"></div>
<div class="a" style="left:305px;top:562px;width:22px;height:22px;background:#fff;border-radius:5px"></div>
<div class="a" style="left:305px;top:586.5px;width:24px;height:1.5px;background:#e6e6e6"></div>
<div class="a" style="left:305px;top:589px;width:22px;height:22px;background:#fff;border-radius:5px"></div>
<svg style="left:0;top:0" width="1480" height="800">
<rect x="308" y="565" width="16" height="17" fill="#000"/><rect x="310" y="565.5" width="12" height="2" fill="#d0202a"/><rect x="310" y="567.5" width="12" height="5" fill="#fff"/><rect x="314" y="575" width="7" height="7" fill="#fff"/><rect x="315" y="576.5" width="3" height="3.5" fill="#000"/>
<rect x="308.5" y="592" width="13" height="15" fill="#fff4b0" stroke="#f0d020" stroke-width="1"/><rect x="312" y="590.5" width="7" height="3" rx="1" fill="#999"/><path d="M313 598 H322 L325 601 L322 604 V609 H313 Z" fill="#000"/><rect x="315" y="599.5" width="5" height="3" fill="#fff"/>
<path d="M363 606.5 H1441" stroke="#d9d9d9" stroke-width="2"/>
<path d="M363 652.0 H1441" stroke="#d9d9d9" stroke-width="2"/>
<path d="M363 697.5 H1441" stroke="#d9d9d9" stroke-width="2"/>
<path d="M363 719.5 H1441" stroke="#d6d6d6" stroke-width="2"/>
<path d="M364.0 720 V726" stroke="#a8a8a8" stroke-width="2"/>
<text x="364.0" y="740.5" text-anchor="middle" font-family="Liberation Sans" font-size="13" fill="#222">0</text>
<path d="M428.0 720 V726" stroke="#a8a8a8" stroke-width="2"/>
<text x="428.0" y="740.5" text-anchor="middle" font-family="Liberation Sans" font-size="13" fill="#222">10</text>
<path d="M492.0 720 V726" stroke="#a8a8a8" stroke-width="2"/>
<text x="492.0" y="740.5" text-anchor="middle" font-family="Liberation Sans" font-size="13" fill="#222">20</text>
<path d="M556.0 720 V726" stroke="#a8a8a8" stroke-width="2"/>
<text x="556.0" y="740.5" text-anchor="middle" font-family="Liberation Sans" font-size="13" fill="#222">30</text>
<path d="M620.0 720 V726" stroke="#a8a8a8" stroke-width="2"/>
<text x="620.0" y="740.5" text-anchor="middle" font-family="Liberation Sans" font-size="13" fill="#222">40</text>
<path d="M684.0 720 V726" stroke="#a8a8a8" stroke-width="2"/>
<text x="684.0" y="740.5" text-anchor="middle" font-family="Liberation Sans" font-size="13" fill="#222">50</text>
<path d="M748.0 720 V726" stroke="#a8a8a8" stroke-width="2"/>
<text x="748.0" y="740.5" text-anchor="middle" font-family="Liberation Sans" font-size="13" fill="#222">60</text>
<path d="M812.0 720 V726" stroke="#a8a8a8" stroke-width="2"/>
<text x="812.0" y="740.5" text-anchor="middle" font-family="Liberation Sans" font-size="13" fill="#222">70</text>
<path d="M876.0 720 V726" stroke="#a8a8a8" stroke-width="2"/>
<text x="876.0" y="740.5" text-anchor="middle" font-family="Liberation Sans" font-size="13" fill="#222">80</text>
<path d="M940.0 720 V726" stroke="#a8a8a8" stroke-width="2"/>
<text x="940.0" y="740.5" text-anchor="middle" font-family="Liberation Sans" font-size="13" fill="#222">90</text>
<path d="M1004.0 720 V726" stroke="#a8a8a8" stroke-width="2"/>
<text x="1004.0" y="740.5" text-anchor="middle" font-family="Liberation Sans" font-size="13" fill="#222">100</text>
<path d="M1068.0 720 V726" stroke="#a8a8a8" stroke-width="2"/>
<text x="1068.0" y="740.5" text-anchor="middle" font-family="Liberation Sans" font-size="13" fill="#222">110</text>
<path d="M1132.0 720 V726" stroke="#a8a8a8" stroke-width="2"/>
<text x="1132.0" y="740.5" text-anchor="middle" font-family="Liberation Sans" font-size="13" fill="#222">120</text>
<path d="M1196.0 720 V726" stroke="#a8a8a8" stroke-width="2"/>
<text x="1196.0" y="740.5" text-anchor="middle" font-family="Liberation Sans" font-size="13" fill="#222">130</text>
<path d="M1260.0 720 V726" stroke="#a8a8a8" stroke-width="2"/>
<text x="1260.0" y="740.5" text-anchor="middle" font-family="Liberation Sans" font-size="13" fill="#222">140</text>
<path d="M1324.0 720 V726" stroke="#a8a8a8" stroke-width="2"/>
<text x="1324.0" y="740.5" text-anchor="middle" font-family="Liberation Sans" font-size="13" fill="#222">150</text>
<path d="M1388.0 720 V726" stroke="#a8a8a8" stroke-width="2"/>
<text x="1388.0" y="740.5" text-anchor="middle" font-family="Liberation Sans" font-size="13" fill="#222">160</text>
<text x="359.5" y="611.1" text-anchor="end" font-family="Liberation Sans" font-size="13" fill="#222">10</text>
<text x="359.5" y="656.6" text-anchor="end" font-family="Liberation Sans" font-size="13" fill="#222">5</text>
<text x="359.5" y="702.1" text-anchor="end" font-family="Liberation Sans" font-size="13" fill="#222">0</text>
<text x="903.5" y="757.5" text-anchor="middle" font-family="Liberation Sans" font-size="15" font-weight="bold" fill="#111">Stunden</text>
<polyline points="364.0,682.1 370.4,691.0 376.8,679.8 383.2,679.8 389.6,679.8 396.0,681.3 402.4,679.8 408.8,682.1 415.2,682.6 421.6,682.6 428.0,683.6 434.4,685.9 440.8,685.9 447.2,686.9 453.6,688.0 460.0,688.0 466.4,688.0 472.8,686.9 479.2,686.9 485.6,685.9 492.0,685.9 498.4,685.9 504.8,685.9 511.2,685.9 517.6,685.9 524.0,696.3 530.4,685.9 536.8,685.9 543.2,684.3 549.6,684.3 556.0,684.3 562.4,684.3 568.8,684.3 575.2,684.3 581.6,685.0 588.0,686.9 594.4,686.9 600.8,686.9 607.2,685.9 613.6,686.9 620.0,686.9 626.4,685.0 632.8,685.0 639.2,686.8 645.6,689.3 652.0,689.3 658.4,689.3 664.8,689.3 671.2,690.8 677.6,696.3 684.0,690.3 690.4,690.3 696.8,690.3 703.2,690.3 709.6,689.1 716.0,690.3 722.4,690.6 728.8,691.4 735.2,691.4 741.6,691.4 748.0,689.1 754.4,689.1 760.8,687.8 767.2,687.8 773.6,686.9 780.0,686.9 786.4,685.9 792.8,685.9 799.2,685.9 805.6,685.9 812.0,685.9 818.4,685.9 824.8,685.9 831.2,692.9 837.6,684.7 844.0,683.6 850.4,683.6 856.8,683.6 863.2,683.6 869.6,683.6 876.0,683.6 882.4,683.6 888.8,683.6 895.2,684.7 901.6,685.9 908.0,685.9 914.4,685.9 920.8,685.9 927.2,685.9 933.6,685.9 940.0,684.7 946.4,684.7 952.8,684.7 959.2,684.7 965.6,683.6 972.0,683.6 978.4,683.6 984.8,691.4 991.2,682.6 997.6,682.6 1004.0,682.6 1010.4,682.6 1016.8,682.6 1023.2,682.6 1029.6,682.6 1036.0,682.6 1042.4,682.6 1048.8,683.6 1055.2,684.7 1061.6,684.7 1068.0,684.7 1074.4,683.6 1080.8,683.6 1087.2,683.6 1093.6,682.6 1100.0,682.6 1106.4,682.6 1112.8,681.3 1119.2,680.8 1125.6,679.3 1132.0,679.8 1138.4,687.3 1144.8,678.4 1151.2,678.4 1157.6,677.3 1164.0,678.4 1170.4,678.4 1176.8,679.8 1183.2,679.8 1189.6,679.8 1196.0,679.3 1202.4,680.8 1208.8,681.3 1215.2,681.3 1221.6,681.3 1228.0,682.8 1234.4,681.3 1240.8,681.3 1247.2,679.8 1253.6,679.8 1260.0,679.8 1266.4,679.8 1272.8,679.8 1279.2,678.8 1285.6,679.8 1292.0,687.3 1298.4,678.8 1304.8,677.6 1311.2,677.6 1317.6,677.6 1324.0,677.6 1330.4,677.6 1336.8,677.6 1343.2,677.6 1349.6,679.8 1356.0,680.8 1362.4,681.3 1368.8,682.6 1375.2,682.6 1381.6,683.6 1388.0,682.6 1394.4,682.6 1400.8,681.3 1407.2,681.3 1413.6,679.8 1420.0,679.8 1426.4,678.8 1432.8,678.8 1439.2,678.8" fill="none" stroke="#e8892a" stroke-width="2.4" stroke-linejoin="round"/>
<polyline points="389.6,697.5 396.0,588.3 402.4,588.3 408.8,697.5" fill="none" stroke="#c41f2b" stroke-width="2.4" stroke-linejoin="round"/>
<polyline points="504.8,697.5 511.2,588.3 517.6,588.3 524.0,697.5" fill="none" stroke="#c41f2b" stroke-width="2.4" stroke-linejoin="round"/>
<polyline points="626.4,697.5 632.8,588.3 639.2,588.3 645.6,697.5" fill="none" stroke="#c41f2b" stroke-width="2.4" stroke-linejoin="round"/>
<polyline points="799.2,697.5 805.6,588.3 812.0,588.3 818.4,697.5" fill="none" stroke="#c41f2b" stroke-width="2.4" stroke-linejoin="round"/>
<polyline points="908.0,697.5 914.4,588.3 920.8,588.3 927.2,697.5" fill="none" stroke="#c41f2b" stroke-width="2.4" stroke-linejoin="round"/>
<polyline points="1016.8,697.5 1023.2,588.3 1029.6,588.3 1036.0,697.5" fill="none" stroke="#c41f2b" stroke-width="2.4" stroke-linejoin="round"/>
<polyline points="1112.8,697.5 1119.2,588.3 1125.6,588.3 1132.0,697.5" fill="none" stroke="#c41f2b" stroke-width="2.4" stroke-linejoin="round"/>
<polyline points="1189.6,697.5 1196.0,588.3 1202.4,588.3 1208.8,697.5" fill="none" stroke="#c41f2b" stroke-width="2.4" stroke-linejoin="round"/>
<polyline points="1272.8,697.5 1279.2,588.3 1285.6,588.3 1292.0,697.5" fill="none" stroke="#c41f2b" stroke-width="2.4" stroke-linejoin="round"/>
<polyline points="1349.6,697.5 1356.0,588.3 1362.4,588.3 1368.8,697.5" fill="none" stroke="#c41f2b" stroke-width="2.4" stroke-linejoin="round"/>
<polyline points="1432.8,697.5 1439.2,588.3" fill="none" stroke="#c41f2b" stroke-width="2.4" stroke-linejoin="round"/>
<path d="M364.0 697.5 H1439.2" stroke="#a083c6" stroke-width="2.2"/>
<polyline points="364.0,712.9 370.4,704.0 376.8,715.2 383.2,715.2 389.6,715.2 396.0,604.5 402.4,606.0 408.8,712.9 415.2,712.4 421.6,712.4 428.0,711.4 434.4,709.1 440.8,709.1 447.2,708.1 453.6,707.0 460.0,707.0 466.4,707.0 472.8,708.1 479.2,708.1 485.6,709.1 492.0,709.1 498.4,709.1 504.8,709.1 511.2,599.9 517.6,599.9 524.0,698.7 530.4,709.1 536.8,709.1 543.2,710.7 549.6,710.7 556.0,710.7 562.4,710.7 568.8,710.7 575.2,710.7 581.6,710.0 588.0,708.1 594.4,708.1 600.8,708.1 607.2,709.1 613.6,708.1 620.0,708.1 626.4,710.0 632.8,600.8 639.2,599.0 645.6,705.7 652.0,705.7 658.4,705.7 664.8,705.7 671.2,704.2 677.6,698.7 684.0,704.7 690.4,704.7 696.8,704.7 703.2,704.7 709.6,705.9 716.0,704.7 722.4,704.4 728.8,703.6 735.2,703.6 741.6,703.6 748.0,705.9 754.4,705.9 760.8,707.2 767.2,707.2 773.6,708.1 780.0,708.1 786.4,709.1 792.8,709.1 799.2,709.1 805.6,599.9 812.0,599.9 818.4,709.1 824.8,709.1 831.2,702.1 837.6,710.3 844.0,711.4 850.4,711.4 856.8,711.4 863.2,711.4 869.6,711.4 876.0,711.4 882.4,711.4 888.8,711.4 895.2,710.3 901.6,709.1 908.0,709.1 914.4,599.9 920.8,599.9 927.2,709.1 933.6,709.1 940.0,710.3 946.4,710.3 952.8,710.3 959.2,710.3 965.6,711.4 972.0,711.4 978.4,711.4 984.8,703.6 991.2,712.4 997.6,712.4 1004.0,712.4 1010.4,712.4 1016.8,712.4 1023.2,603.2 1029.6,603.2 1036.0,712.4 1042.4,712.4 1048.8,711.4 1055.2,710.3 1061.6,710.3 1068.0,710.3 1074.4,711.4 1080.8,711.4 1087.2,711.4 1093.6,712.4 1100.0,712.4 1106.4,712.4 1112.8,713.7 1119.2,605.0 1125.6,606.5 1132.0,715.2 1138.4,707.7 1144.8,716.6 1151.2,716.6 1157.6,717.7 1164.0,716.6 1170.4,716.6 1176.8,715.2 1183.2,715.2 1189.6,715.2 1196.0,606.5 1202.4,605.0 1208.8,713.7 1215.2,713.7 1221.6,713.7 1228.0,712.2 1234.4,713.7 1240.8,713.7 1247.2,715.2 1253.6,715.2 1260.0,715.2 1266.4,715.2 1272.8,715.2 1279.2,607.0 1285.6,606.0 1292.0,707.7 1298.4,716.2 1304.8,717.4 1311.2,717.4 1317.6,717.4 1324.0,717.4 1330.4,717.4 1336.8,717.4 1343.2,717.4 1349.6,715.2 1356.0,605.0 1362.4,604.5 1368.8,712.4 1375.2,712.4 1381.6,711.4 1388.0,712.4 1394.4,712.4 1400.8,713.7 1407.2,713.7 1413.6,715.2 1420.0,715.2 1426.4,716.2 1432.8,716.2 1439.2,607.0" fill="none" stroke="#4b9a0c" stroke-width="2.4" stroke-linejoin="round"/>
<path d="M536 781 H549" stroke="#e8892a" stroke-width="2.4"/>
<text x="555.5" y="785.5" font-family="Liberation Sans" font-size="13" fill="#222">Wärmebedarf [kWh]</text>
<path d="M682 781 H695" stroke="#c41f2b" stroke-width="2.4"/>
<text x="701" y="785.5" font-family="Liberation Sans" font-size="13" fill="#222">Arbeit BHKW-Modul [kWh]</text>
<path d="M864 781 H878" stroke="#9b6fbf" stroke-width="2.4"/>
<text x="884" y="785.5" font-family="Liberation Sans" font-size="13" fill="#222">Arbeit Spitzenlastkessel [kWh]</text>
<path d="M1070 781 H1083" stroke="#4b9a0c" stroke-width="2.4"/>
<text x="1089" y="785.5" font-family="Liberation Sans" font-size="13" fill="#222">Wärme-Speicherung [kWh]</text>
</svg>
<div class="a" style="left:300px;top:802px;width:1181px;height:77px;background:#b3b3b3"></div>
<div class="a" style="left:295px;top:885px;width:1208px;height:31px;background:#f0f0f0"></div>
<div class="a" style="left:295px;top:916px;width:1208px;height:87px;background:#fff;border-left:1px solid #c8c8c8;border-bottom:2px solid #a8a8a8"></div>
<div class="a" style="left:295px;top:886px;width:29px;height:29px;background:#a9d133"></div>
<svg style="left:0;top:0" width="330" height="920"><path d="M303 893 L316 907 M316 893 L303 907" stroke="#c0202a" stroke-width="2.2"/></svg>
<div class="t" style="left:328px;top:891px;font-size:13.6px;font-weight:bold">Protokoll- Anzeige</div>
<div class="lbr" style="right:265px;top:891.5px;font-size:12.6px">Durch Klicken der mit einem <span style="font-size:11px">⚠</span> markierten Zeile wird die zugehörige Eingabemaske geöffnet.</div>
<!-- right panel -->
<div class="a" style="left:1503px;top:112px;width:262px;height:891px;background:#f0f0f0"></div><div class="a" style="left:1731px;top:88px;width:34px;height:24px;background:#f0f0f0"></div>
<div class="a" style="left:1505px;top:87.5px;width:227px;height:24px;background:#fdfdfd;border-top:1px solid #f0f0f8"></div>
<div class="t" style="left:1509px;top:94px;font-size:12.8px">Ist-Zustand</div>
<svg style="left:1716px;top:97px" width="12" height="7"><path d="M0.8 0.8 L5.5 5.5 L10.2 0.8" stroke="#444" stroke-width="1.1" fill="none"/></svg>
<div class="a" style="left:1733px;top:87.5px;width:25px;height:24.5px;border:2px solid #1f6cb4;border-radius:5px;background:#a5cf35;box-shadow:inset 0 0 0 1px #d8ecfa"></div>
<svg style="left:1737px;top:92px" width="18" height="16"><path d="M2 14.8 L8.3 1 L14.6 14.8 M4.8 10.3 H11.8" stroke="#fff" stroke-width="1.6" fill="none"/></svg>
<!-- cards container -->
<div class="a" style="left:1505px;top:112px;width:256px;height:863px;background:#fff;border:2px solid #6e6e6e;border-bottom:3.5px solid #737373"></div>
<div class="a" style="left:1507px;top:502.5px;width:252px;height:5.5px;background:#747474"></div>
<div class="a" style="left:1507px;top:627.5px;width:252px;height:5.5px;background:#747474"></div>
<div class="a" style="left:1507px;top:725px;width:252px;height:5.5px;background:#747474"></div>
<div class="a" style="left:1507px;top:843.5px;width:252px;height:5.5px;background:#747474"></div>
<style>
.ct{position:absolute;white-space:nowrap;line-height:1;font-size:20px;color:#1b1b2b}
.cs{position:absolute;white-space:nowrap;line-height:1;font-size:15.2px;color:#1b1b2b}
.dot{position:absolute;width:20px;height:20px;border-radius:50%;background:#7fb52a}
.bx{position:absolute;left:1527px;width:213px;background:#fff;box-shadow:1px 1.5px 1.5px rgba(0,0,0,.45)}
.bx .gs{position:absolute;left:0;top:0;bottom:0;width:17px;background:#d3d3d3}
.bar{position:absolute;left:26px}
.bt{position:absolute;white-space:nowrap;line-height:1;font-size:10.5px;color:#222;left:31px;letter-spacing:-0.1px}
.vt{position:absolute;white-space:nowrap;line-height:1;transform:rotate(-90deg);transform-origin:center;color:#333;font-weight:normal}
</style>
<!-- card 1 GEG -->
<div class="ct" style="left:1524.5px;top:124.5px">GEG 2024</div>
<div class="cs" style="left:1525px;top:147.6px">DIN V 18599</div>
<div class="dot" style="left:1721.5px;top:127px"></div>
<div class="bx" style="top:171px;height:154px"><div class="gs"></div><div class="bar" style="top:0;width:187px;height:154px;background:#5f9918"></div></div>
<div class="vt" style="left:1496px;top:242.5px;width:78px;text-align:center;font-size:10.3px;font-weight:normal;color:#111">Effizienzklasse</div>
<svg style="left:0;top:0" width="1765" height="330">
 <path fill-rule="evenodd" fill="#fff" d="M1561.5 293 L1598.5 190 H1614.5 L1650.5 293 H1635.5 L1625.5 266 H1586 L1576 293 Z M1590.5 251 H1621.5 L1606 206.5 Z"/>
 <path fill="#fff" d="M1687 226 H1697.7 V254 H1726.6 V266 H1697.7 V293.5 H1687 V266 H1658 V254 H1687 Z"/>
</svg>
<div class="t" style="left:1625px;top:300.5px;font-size:14.9px;font-weight:bold;color:#fff">3,7 kWh/(m²a)</div>
<!-- QP -->
<div class="bx" style="top:332px;height:59px"><div class="gs"></div>
 <div class="bar" style="top:0;width:112px;height:19px;background:#d3d3d3"></div>
 <div class="bar" style="top:20px;width:61.5px;height:19px;background:#4a80b8"></div>
 <div class="bar" style="top:39px;width:8px;height:20px;background:linear-gradient(90deg,#5a9a18,#7ab828)"></div>
 <div class="bt" style="top:5px">91 kWh/(m²a)</div>
 <div class="bt" style="top:24.5px">50 kWh/(m²a)</div>
 <div class="bt" style="top:44px">6,7 kWh/(m²a)</div>
</div>
<div class="vt" style="left:1520px;top:356px;width:30px;text-align:center;font-size:10px">Q P</div>
<!-- HT -->
<div class="bx" style="top:397px;height:59px"><div class="gs"></div>
 <div class="bar" style="top:1px;width:95px;height:18px;background:#d3d3d3"></div>
 <div class="bar" style="top:20px;width:95px;height:19px;background:#4a80b8"></div>
 <div class="bar" style="top:40px;width:52px;height:19px;background:linear-gradient(90deg,#5a9a18,#b8e050)"></div>
 <div class="bt" style="top:5px">0,41 W/(m²K)</div>
 <div class="bt" style="top:24.5px">0,41 W/(m²K)</div>
 <div class="bt" style="top:44px">0,22 W/(m²K)</div>
</div>
<div class="vt" style="left:1520px;top:421px;width:30px;text-align:center;font-size:10px">HT</div>
<!-- EH -->
<div class="bx" style="top:464px;height:20px"><div class="gs"></div>
 <div class="bar" style="top:0;width:44px;height:20px;background:#5f9918"></div>
 <div class="t" style="left:56px;top:5px;font-size:11px;font-weight:bold;color:#fff">40</div>
</div>
<div class="vt" style="left:1520px;top:469px;width:30px;text-align:center;font-size:10px">EH</div>
<!-- card 2 EE -->
<div class="ct" style="left:1524.5px;top:518px">Erneuerbare</div>
<div class="ct" style="left:1524.5px;top:542px">Energien</div>
<div class="dot" style="left:1722px;top:521px"></div>
<div class="bx" style="top:570px;height:39px"><div class="gs"></div>
 <div class="bar" style="top:0;width:121px;height:19px;background:#d3d3d3"></div>
 <div class="bar" style="top:20px;width:187px;height:19px;background:linear-gradient(90deg,#b02a20 0%,#e0822a 25%,#f8d838 45%,#d8e040 58%,#a8d040 75%,#5a9a18 100%)"></div>
 <div class="bt" style="top:4.5px;font-size:10px">65 %</div>
 <div class="bt" style="top:24px;font-size:10px">100 %</div>
</div>
<div class="vt" style="left:1520px;top:584px;width:30px;text-align:center;font-size:10px">EE</div>
<!-- card 3 -->
<div class="ct" style="left:1524.5px;top:643.5px">Sommerlicher</div>
<div class="ct" style="left:1524.5px;top:667.5px">Wärmeschutz</div>
<div class="cs" style="left:1525px;top:690.8px">DIN 4108-2</div>
<div class="dot" style="left:1722px;top:646px"></div>
<!-- card 4 -->
<div class="ct" style="left:1524.5px;top:740.5px">Lüftungskonzept</div>
<div class="cs" style="left:1525px;top:764px">DIN 1946-6</div>
<div class="dot" style="left:1722px;top:743px"></div>
<div class="bx" style="top:787px;height:38px"><div class="gs"></div>
 <div class="bar" style="top:0;width:93px;height:18px;background:#d3d3d3"></div>
 <div class="bar" style="top:19px;width:84.5px;height:19px;background:linear-gradient(90deg,#4a7ab0,#78a8d8)"></div>
 <div class="bt" style="top:4px;font-size:10px">31 m³/h</div>
 <div class="bt" style="top:23.5px;font-size:10px">29 m³/h</div>
</div>
<div class="vt" style="left:1510px;top:800px;width:50px;text-align:center;font-size:9px">inf min</div>
<!-- card 5 -->
<div class="ct" style="left:1524.5px;top:859.7px">Beratung</div>
<div class="cs" style="left:1525px;top:882px">DIN V 18599</div>
<div class="bx" style="top:906px;height:19px"><div class="gs"></div>
 <div class="bar" style="top:0;width:2px;height:19px;background:#6aaa20"></div>
 <div class="bt" style="top:4.5px;font-size:10.5px;left:32px">1,63 kWh/(m²a)</div>
</div>
<div class="vt" style="left:1520px;top:910px;width:30px;text-align:center;font-size:9.5px">QH</div>
<div class="bx" style="top:932px;height:20px"><div class="gs"></div>
 <div class="bar" style="top:0;width:2px;height:20px;background:#6aaa20"></div>
 <div class="bt" style="top:5px;font-size:10.5px;left:32px">0,83 kg/(m²a)</div>
</div>
<div class="vt" style="left:1520px;top:937px;width:30px;text-align:center;font-size:9.5px">CO2</div>

</div>
<div id="corner"></div>
</body></html>
